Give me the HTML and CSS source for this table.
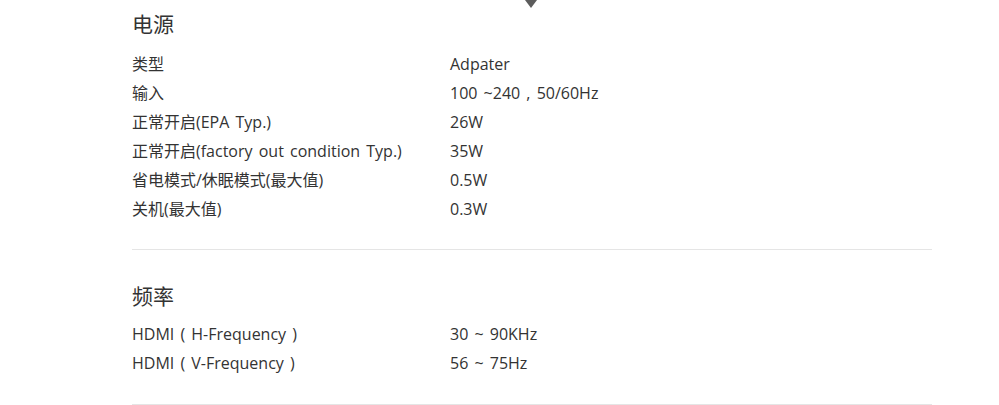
FILE: index.html
```html
<!DOCTYPE html>
<html lang="zh-CN">
<head>
<meta charset="utf-8">
<title>规格</title>
<link rel="stylesheet" href="styles.css">
</head>
<body>
<div class="page">
  <span class="caret" aria-hidden="true"></span>
  <section class="spec">
    <h2 class="spec-title">电源</h2>
    <dl class="spec-list">
      <div class="row"><dt>类型</dt><dd>Adpater</dd></div>
      <div class="row"><dt>输入</dt><dd>100 ~240 , 50/60Hz</dd></div>
      <div class="row"><dt>正常开启(EPA Typ.)</dt><dd>26W</dd></div>
      <div class="row"><dt>正常开启(factory out condition Typ.)</dt><dd>35W</dd></div>
      <div class="row"><dt>省电模式/休眠模式(最大值)</dt><dd>0.5W</dd></div>
      <div class="row"><dt>关机(最大值)</dt><dd>0.3W</dd></div>
    </dl>
  </section>
  <section class="spec">
    <h2 class="spec-title">频率</h2>
    <dl class="spec-list">
      <div class="row"><dt>HDMI ( H-Frequency )</dt><dd>30 ~ 90KHz</dd></div>
      <div class="row"><dt>HDMI ( V-Frequency )</dt><dd>56 ~ 75Hz</dd></div>
    </dl>
  </section>
</div>
</body>
</html>
```

FILE: styles.css
```css
html, body {
  margin: 0;
  padding: 0;
  background: #fff;
}
body {
  font-family: "Open Sans", "Noto Sans CJK SC", sans-serif;
  color: #333;
}
.page {
  position: relative;
  width: 800px;
  margin-left: 132px;
  padding-top: 10px;
}
.caret {
  position: absolute;
  top: 0;
  left: 393px;
  width: 0;
  height: 0;
  border-left: 6px solid transparent;
  border-right: 6px solid transparent;
  border-top: 8px solid #5c5c5c;
}
.spec {
  border-bottom: 1px solid #e5e5e5;
  padding-bottom: 25px;
  margin-bottom: 32px;
}
.spec:last-of-type {
  margin-bottom: 0;
  padding-bottom: 26px;
}
.spec-title {
  margin: 0 0 10px;
  font-size: 21px;
  font-weight: normal;
  line-height: 28px;
}
.spec:first-of-type .spec-title {
  margin-bottom: 12px;
}
.spec-list {
  margin: 0;
}
.row {
  display: flex;
  font-size: 16px;
  line-height: 29px;
  word-spacing: 2px;
}
.row dt {
  width: 318px;
  flex: none;
}
.row dd {
  margin: 0;
}
```
